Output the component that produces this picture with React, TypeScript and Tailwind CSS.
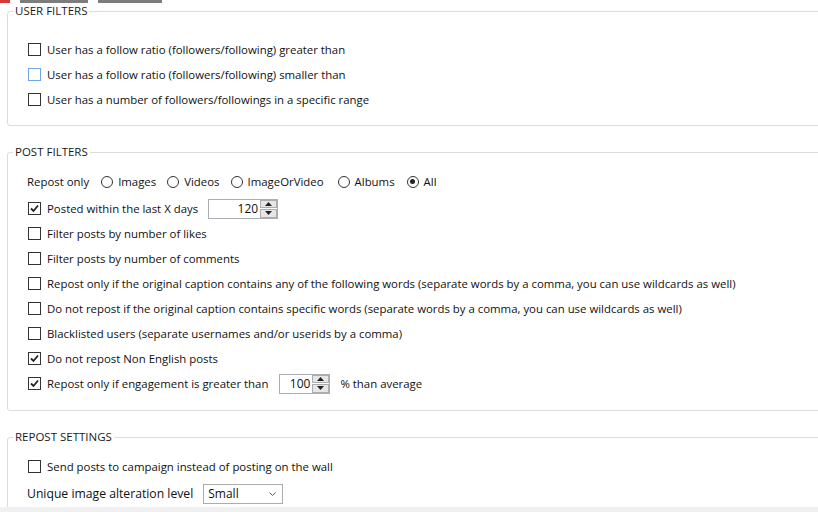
import clsx from "clsx";

function Check({ checked, blue }: { checked?: boolean; blue?: boolean }) {
  return (
    <span
      className={clsx(
        "w-[13px] h-[13px] border bg-white flex items-center justify-center shrink-0",
        blue ? "border-[#6ea6e6]" : "border-[#333333]"
      )}
    >
      {checked && (
        <svg width="9" height="9" viewBox="0 0 9 9">
          <path d="M1 4.5 L3.5 7 L8 1.5" fill="none" stroke="#222" strokeWidth="1.8" />
        </svg>
      )}
    </span>
  );
}

function Radio({ label, checked, className }: { label: string; checked?: boolean; className?: string }) {
  return (
    <div className={clsx("flex items-center gap-[5px]", className)}>
      <span className="w-[12px] h-[12px] rounded-full border border-[#333333] bg-white flex items-center justify-center">
        {checked && <span className="w-[5px] h-[5px] rounded-full bg-[#222]" />}
      </span>
      <span>{label}</span>
    </div>
  );
}

function CheckRow({ label, checked, blue }: { label: string; checked?: boolean; blue?: boolean }) {
  return (
    <div className="h-[25px] flex items-center gap-[6px] pl-[20px]">
      <Check checked={checked} blue={blue} />
      <span>{label}</span>
    </div>
  );
}

function Spinner({ value, width }: { value: string; width: string }) {
  return (
    <div className={clsx("h-[20px] border border-[#abadb3] bg-white flex items-center", width)}>
      <span className="flex-1 text-right pr-[2px] text-[12px]">{value}</span>
      <div className="flex flex-col w-[17px] h-[18px] gap-px">
        <span className="flex-1 bg-[#e6e6e6] border border-[#acacac] flex items-center justify-center">
          <svg width="7" height="4" viewBox="0 0 7 4">
            <path d="M0 4 L3.5 0 L7 4 Z" fill="#222" />
          </svg>
        </span>
        <span className="flex-1 bg-[#e6e6e6] border border-[#acacac] flex items-center justify-center">
          <svg width="7" height="4" viewBox="0 0 7 4">
            <path d="M0 0 L7 0 L3.5 4 Z" fill="#222" />
          </svg>
        </span>
      </div>
    </div>
  );
}

function Group({ title, className, children }: { title: string; className?: string; children: React.ReactNode }) {
  return (
    <fieldset className={clsx("ml-[7px] w-[830px] border border-[#dcdcdc] rounded-[3px]", className)}>
      <legend className="ml-[5px] px-[2px] h-[16px] leading-[15px] text-[#1a1a1a] text-[11.5px]">{title}</legend>
      {children}
    </fieldset>
  );
}

export default function App() {
  return (
    <div className="h-[512px] w-[818px] overflow-hidden flex flex-col bg-white font-['Open_Sans',sans-serif] text-[11.4px] leading-[16px] text-[#111]">
      <div className="h-[3px] flex shrink-0">
        <span className="w-[10px] bg-[#d9393b]" />
        <span className="w-[10px]" />
        <span className="w-[68px] bg-[#7d7d7d]" />
        <span className="w-[10px]" />
        <span className="w-[64px] bg-[#7d7d7d]" />
      </div>

      <div className="flex-1 min-h-0 overflow-hidden">
        <Group title="USER FILTERS" className="pt-[18px] pb-[13px]">
          <CheckRow label="User has a follow ratio (followers/following) greater than" />
          <CheckRow label="User has a follow ratio (followers/following) smaller than" blue />
          <CheckRow label="User has a number of followers/followings in a specific range" />
        </Group>

        <Group title="POST FILTERS" className="mt-[18px] pt-[9px] pb-[14px]">
          <div className="h-[25px] flex items-center pl-[19px] gap-[11px]">
            <span className="mr-[1px]">Repost only</span>
            <Radio label="Images" />
            <Radio label="Videos" />
            <Radio label="ImageOrVideo" />
            <Radio label="Albums" className="ml-[3px]" />
            <Radio label="All" checked className="ml-[1px]" />
          </div>
          <div className="h-[27px] flex items-center gap-[6px] pl-[20px] pt-[2px]">
            <Check checked />
            <span>Posted within the last X days</span>
            <span className="ml-[4px]">
              <Spinner value="120" width="w-[70px]" />
            </span>
          </div>
          <CheckRow label="Filter posts by number of likes" />
          <CheckRow label="Filter posts by number of comments" />
          <CheckRow label="Repost only if the original caption contains any of the following words (separate words by a comma, you can use wildcards as well)" />
          <CheckRow label="Do not repost if the original caption contains specific words (separate words by a comma, you can use wildcards as well)" />
          <CheckRow label="Blacklisted users (separate usernames and/or userids by a comma)" />
          <CheckRow label="Do not repost Non English posts" checked />
          <div className="h-[25px] flex items-center gap-[6px] pl-[20px]">
            <Check checked />
            <span>Repost only if engagement is greater than</span>
            <span className="ml-[5px]">
              <Spinner value="100" width="w-[51px]" />
            </span>
            <span className="ml-[4px]">% than average</span>
          </div>
        </Group>

        <Group title="REPOST SETTINGS" className="mt-[18px] pt-[9px] pb-[15px]">
          <CheckRow label="Send posts to campaign instead of posting on the wall" />
          <div className="h-[27px] flex items-center pl-[19px] gap-[10px] pt-[2px]">
            <span className="text-[12.2px]">Unique image alteration level</span>
            <div className="w-[80px] h-[20px] border border-[#acacac] bg-white flex items-center pl-[4px] pr-[6px]">
              <span className="flex-1 text-[12px]">Small</span>
              <svg width="7" height="4" viewBox="0 0 7 4">
                <path d="M0.5 0.5 L3.5 3.5 L6.5 0.5" fill="none" stroke="#555" strokeWidth="1" />
              </svg>
            </div>
          </div>
        </Group>
      </div>

      <div className="h-[5px] shrink-0 bg-[#f0f0f0]" />
    </div>
  );
}
